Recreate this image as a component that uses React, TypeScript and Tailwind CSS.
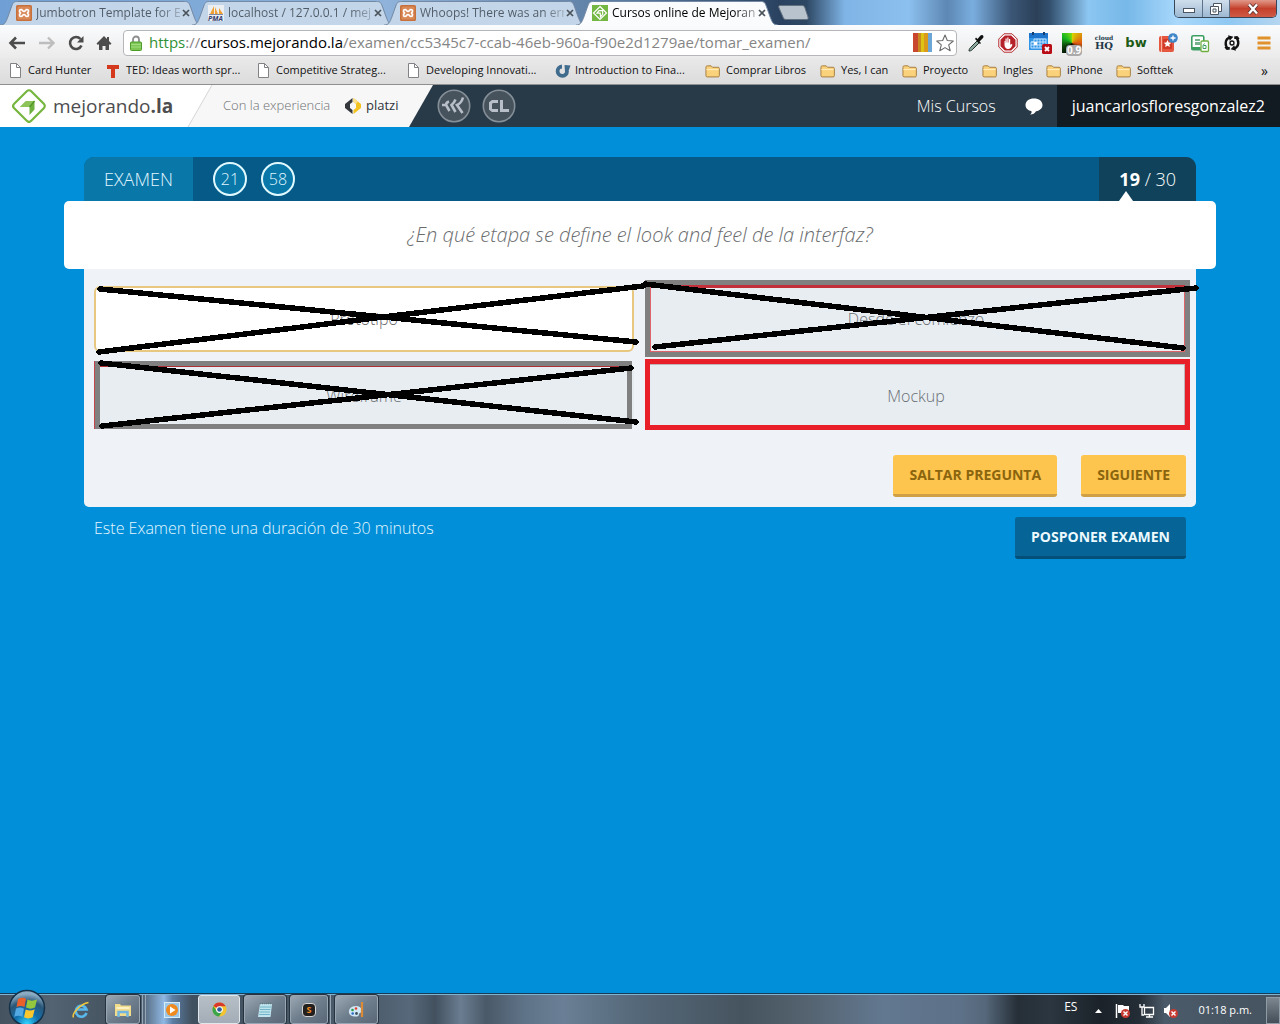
import type { ReactNode } from "react";

type TabData = { title: string; icon: ReactNode; active?: boolean };

function XamppIcon() {
  return (
    <svg viewBox="0 0 16 16" className="size-4 shrink-0" aria-hidden="true">
      <rect width="16" height="16" rx="1.5" fill="#c8703c" />
      <rect x="1.5" y="1.5" width="13" height="13" rx="1" fill="#d98a58" />
      <path d="M5 4.500c-2 0-2 3 0 3.500-2 .5-2 3.500 0 3.500 1.600 0 1.500-2 3-2s1.400 2 3 2c2 0 2-3 0-3.500 2-.5 2-3.500 0-3.500-1.600 0-1.500 2-3 2s-1.400-2-3-2z" fill="none" stroke="#fff" strokeWidth="1.700" />
    </svg>
  );
}

function PmaIcon() {
  return (
    <span className="relative block size-4 shrink-0 bg-[#eceff2]">
      <svg viewBox="0 0 16 16" className="size-4" aria-hidden="true">
        <path d="M2 9 6 1v8zM7 9V2l3 7zM11 9V3l4 6z" fill="#f0a030" />
        <path d="M1 9.500h14" stroke="#7f8aa8" />
      </svg>
      <span className="absolute -bottom-px left-0 text-[7px] leading-[7px] font-bold text-[#34406e] italic">PMA</span>
    </span>
  );
}

function MejorandoIcon() {
  return (
    <svg viewBox="0 0 16 16" className="size-4 shrink-0" aria-hidden="true">
      <rect width="16" height="16" fill="#74b843" />
      <path d="M8 1.500 14.500 8 8 14.500 1.500 8z" fill="none" stroke="#fff" strokeWidth="1.200" />
      <path d="M5 8.200 7 5.700h3.700v3.700L8.500 12 8.200 8.200z" fill="none" stroke="#fff" strokeWidth="1.200" />
    </svg>
  );
}

const tabs: TabData[] = [
  { title: "Jumbotron Template for E", icon: <XamppIcon /> },
  { title: "localhost / 127.0.0.1 / mej", icon: <PmaIcon /> },
  { title: "Whoops! There was an err", icon: <XamppIcon /> },
  { title: "Cursos online de Mejoran", icon: <MejorandoIcon />, active: true },
];

function Tab({ title, icon, active }: TabData) {
  return (
    <div className={active ? "relative z-10 flex h-full w-48 items-center pl-2" : "relative flex h-full w-48 items-center pl-2"}>
      <svg viewBox="0 0 206 24" preserveAspectRatio="none" className="absolute bottom-0 -left-2 h-6 w-[202px]" aria-hidden="true">
        <path
          d="M0 24C5 24 6 21 8 16L12 5C13.500 1.500 14 .5 18 .5H188C192 .5 192.500 1.500 194 5L198 16C200 21 201 24 206 24"
          fill={active ? "#fafbfc" : "#c3d5e8"}
          stroke="#7288a3"
          strokeWidth="1"
        />
      </svg>
      <div className="relative flex min-w-0 flex-1 items-center">
        {icon}
        <button
          className={
            active
              ? "ml-1 w-[144px] bg-gradient-to-r from-black from-85% to-black/30 bg-clip-text text-left text-xs whitespace-nowrap text-transparent"
              : "ml-1 w-[144px] bg-gradient-to-r from-[#4f5a66] from-85% to-[#4f5a66]/30 bg-clip-text text-left text-xs whitespace-nowrap text-transparent"
          }
        >
          {title}
        </button>
        <button aria-label={"Cerrar " + title} className="flex h-4 w-3 items-center justify-center">
          <svg viewBox="0 0 8 8" className="size-2" aria-hidden="true">
            <path d="m1 1 6 6M7 1 1 7" stroke="#4a525a" strokeWidth="1.700" />
          </svg>
        </button>
      </div>
    </div>
  );
}

function TabStrip() {
  return (
    <div className="flex h-[25px] items-stretch bg-[linear-gradient(90deg,#6f9fd4_0%,#8fb3da_30%,#56779c_50%,#2a4260_61%,#2d4763_63%,#7fb4e6_66%,#8cc0ee_71%,#5d87b4_74%,#7aaedf_76%,#3b5676_79%,#2b4058_81%,#33506e_82%,#8cc6f2_85%,#76b8e8_88%,#a9d8fb_92%,#8fc8f2_96%,#b5d6f0_100%)] pl-2 font-['Open_Sans',sans-serif]">
      {tabs.map((tab) => (
        <Tab key={tab.title} {...tab} />
      ))}
      <button aria-label="Nueva pestaña" className="ml-0.5 flex h-full items-center">
        <svg viewBox="0 0 32 15" className="h-[15px] w-8" aria-hidden="true">
          <path d="M2 .5h22c2 0 2.500 1 3 2.500l3 9c.5 1.500 0 2.500-1.500 2.500H8c-2 0-2.500-1-3-2.500L1 3C.5 1.500.5.5 2 .5z" fill="#b9c3cd" stroke="#62707f" />
        </svg>
      </button>
      <div className="mr-[3px] ml-auto flex h-[18px] overflow-hidden rounded-b-[5px] border border-t-0 border-[#37475a]">
        <button aria-label="Minimizar" className="flex w-7 items-center justify-center border-r border-[#5c7288] bg-gradient-to-b from-[#d0dfed] to-[#9db8d1]">
          <svg viewBox="0 0 12 6" className="mt-1 h-1.5 w-3" aria-hidden="true">
            <rect x=".5" y=".5" width="11" height="4" fill="#fff" stroke="#4a5563" />
          </svg>
        </button>
        <button aria-label="Restaurar" className="flex w-[27px] items-center justify-center border-r border-[#5c7288] bg-gradient-to-b from-[#d0dfed] to-[#9db8d1]">
          <svg viewBox="0 0 12 12" className="size-3" aria-hidden="true">
            <path d="M3.500.5h8v8h-3v3h-8v-8h3z" fill="#fff" stroke="#4a5563" />
            <path d="M3.500 3.500h5v5M3 6h3v3H3z" fill="none" stroke="#4a5563" />
          </svg>
        </button>
        <button aria-label="Cerrar ventana" className="flex w-[46px] items-center justify-center bg-gradient-to-b from-[#e0988a] via-[#c4402c] to-[#cf5a45]">
          <svg viewBox="0 0 12 12" className="size-3" aria-hidden="true">
            <path d="m2 1.500 8 9M10 1.500l-8 9" stroke="#5a3030" strokeWidth="4" />
            <path d="m2 1.500 8 9M10 1.500l-8 9" stroke="#fff" strokeWidth="2.400" />
          </svg>
        </button>
      </div>
    </div>
  );
}

const extensions: { name: string; icon: ReactNode }[] = [
  {
    name: "Selector de color",
    icon: (
      <svg viewBox="0 0 20 20" className="size-5">
        <path d="M3 18c0-2 1-3 2-4l6-6 2 2-6 6c-1 1-2 2-4 2z" fill="#8aa59a" stroke="#24332e" />
        <path d="m9 6 5 5 1-1-1.500-1.500L17 5c1.500-2-.5-4-2.500-2.500L11.500 6 10 4.500z" fill="#111" />
      </svg>
    ),
  },
  {
    name: "AdBlock",
    icon: (
      <svg viewBox="0 0 20 20" className="size-5">
        <path d="M6 .8h8L19.200 6v8L14 19.200H6L.8 14V6z" fill="#fff" stroke="#b22a2e" />
        <path d="M6.800 2.500h6.400l4.300 4.300v6.400l-4.300 4.300H6.800l-4.300-4.300V6.800z" fill="#b5222a" />
        <path d="M6.500 8v4c0 2 1.500 4 3.500 4 2.200 0 3.500-1.500 4.500-4.500l-1.500-.5-.8 1V6h-1.200v3.500h-.5V4.500H9.300v5h-.6V5.500H7.500v4.500H7.300V8z" fill="#fff" />
      </svg>
    ),
  },
  {
    name: "Calendario",
    icon: (
      <svg viewBox="0 0 24 24" className="size-6">
        <rect x="1" y="2" width="19" height="17" fill="#2f95e6" />
        <rect x="1" y="2" width="19" height="5" fill="#1c74cc" />
        <path d="M5 1v3M16 1v3" stroke="#123e70" strokeWidth="2" />
        <path d="M6 8h12v9H3v-6h3zM3 11h15M3 14h15M6 11v6M9 8v9M12 8v9M15 8v9" fill="none" stroke="#cfe8ff" strokeWidth=".9" />
        <path d="M6 11h3v3H6z" fill="#fff" />
        <rect x="14" y="13" width="10" height="10" rx="1.500" fill="#b80d17" />
        <path d="m17 16 4 4M21 16l-4 4" stroke="#fff" strokeWidth="1.800" />
      </svg>
    ),
  },
  {
    name: "PageRank",
    icon: (
      <span className="relative block size-5 bg-[conic-gradient(from_0deg,#d9d400,#e05a10_25%,#3a1c00_40%,#000_55%,#0d4a0b_70%,#17b520_85%,#7fdc10)]">
        <span className="absolute top-3 left-1 rounded-sm bg-[#aaa] px-px text-[10px] leading-[11px] font-bold text-white">0.9</span>
      </span>
    ),
  },
  {
    name: "cloudHQ",
    icon: (
      <span className="flex flex-col items-center font-['DejaVu_Serif',serif] font-bold text-[#20384a]">
        <span className="text-[6px] leading-[6px]">cloud</span>
        <span className="text-[10px] leading-[10px]">HQ</span>
      </span>
    ),
  },
  {
    name: "BuiltWith",
    icon: <span className="font-['DejaVu_Sans',sans-serif] text-[13px] leading-4 font-bold text-[#1d5a14]">bw</span>,
  },
  {
    name: "Marcadores",
    icon: (
      <svg viewBox="0 0 20 20" className="size-5">
        <rect x="1" y="3" width="15" height="16" rx="2" fill="#e5573f" />
        <path d="M3.500 3v16" stroke="#f7b4a5" />
        <rect x="5" y="6" width="9" height="10" rx="1" fill="#d03a26" />
        <path d="m9.500 7 1.200 2.500 2.600.2-2 1.800.6 2.600-2.400-1.400-2.400 1.400.6-2.600-2-1.800 2.600-.2z" fill="#fff" />
        <circle cx="15" cy="5" r="4.800" fill="#3f86c9" />
        <path d="M15 2.500v5M12.500 5h5" stroke="#fff" strokeWidth="1.300" />
      </svg>
    ),
  },
  {
    name: "Diccionario",
    icon: (
      <svg viewBox="0 0 20 20" className="size-5">
        <rect x="1.800" y="2.800" width="12" height="14" rx="1.500" fill="#fff" stroke="#3d9e62" strokeWidth="1.600" />
        <path d="M5 6h5v2H5zM5 9h5v3H5z" fill="#78b28d" />
        <path d="M1.500 14h9v3h-9z" fill="#3d9e62" />
        <rect x="11" y="8" width="7.500" height="10.500" rx="1" fill="#fff" stroke="#6fae3e" strokeWidth="1.300" />
        <path d="M14.500 10.500 13 12.500V15.500h3v-3h-2.500" fill="none" stroke="#3d9e62" />
      </svg>
    ),
  },
  {
    name: "Sincronizar",
    icon: (
      <svg viewBox="0 0 20 20" className="size-[18px]">
        <path d="M6 16.500C1.500 13 2 5.500 7.500 4M14 3.500c4.500 3.500 4 11-1.500 12.500" fill="none" stroke="#111" strokeWidth="2.600" />
        <path d="M5.500 1.500 11.500 3 7.500 7.500zM14.500 18.500 8.500 17l4-4.500z" fill="#111" />
        <path d="M1.500 14.500h6v3h-4zM18.500 5.500h-6v-3h4z" fill="#111" />
        <circle cx="10" cy="10" r="2.200" fill="none" stroke="#111" strokeWidth="1.500" />
      </svg>
    ),
  },
  {
    name: "Menú",
    icon: (
      <svg viewBox="0 0 14 14" className="size-3.5">
        <path d="M.5 2h13M.5 7h13M.5 12h13" stroke="#e0912b" strokeWidth="2.800" />
      </svg>
    ),
  },
];

function Toolbar() {
  return (
    <div className="flex h-[33px] items-center bg-gradient-to-b from-[#fafbfc] to-[#ebebec] pt-0.5 font-['Open_Sans',sans-serif]">
      <div className="flex w-[123px] shrink-0 items-center gap-3 pl-2">
        <button aria-label="Atrás">
          <svg viewBox="0 0 18 14" className="h-3.5 w-[18px]"><path d="M17 7H3M8 1.500 2.500 7 8 12.500" fill="none" stroke="#4c4c4c" strokeWidth="2.600" /></svg>
        </button>
        <button aria-label="Adelante">
          <svg viewBox="0 0 18 14" className="h-3.5 w-[18px]"><path d="M1 7h14M10 1.500 15.500 7 10 12.500" fill="none" stroke="#bdbdbd" strokeWidth="2.400" /></svg>
        </button>
        <button aria-label="Recargar">
          <svg viewBox="0 0 16 16" className="size-4"><path d="M13.500 10.500A6 6 0 1 1 12.500 4" fill="none" stroke="#4c4c4c" strokeWidth="2.600" /><path d="M15.500 1v6.500H9z" fill="#4c4c4c" /></svg>
        </button>
        <button aria-label="Inicio">
          <svg viewBox="0 0 16 16" className="size-4"><path d="M8 1 .5 8.500 2 10l1-1v6h3.500v-4h3v4H13V9l1 1 1.500-1.500L13 6V2h-2v2z" fill="#4c4c4c" /></svg>
        </button>
      </div>
      <div className="relative flex h-[26px] min-w-0 flex-1 items-center rounded-sm border border-[#b4b6b9] bg-white pr-0.5 pl-1.5">
        <svg viewBox="0 0 12 16" className="h-4 w-3 shrink-0" aria-hidden="true">
          <path d="M3 8V4.500a3 3 0 0 1 6 0V8" fill="none" stroke="#8e8e8e" strokeWidth="1.800" />
          <rect x=".5" y="7" width="11" height="8.500" rx="1" fill="#7cc651" stroke="#4f9a2c" />
          <path d="M1 9.500h10M1 12h10" stroke="#a4dc82" />
        </svg>
        <div className="ml-[7px] min-w-0 flex-1 truncate text-[15px] text-[#858585]" role="textbox" aria-label="Dirección" contentEditable suppressContentEditableWarning>
          <span className="text-[#2f9135]">https</span>://<span className="text-black">cursos.mejorando.la</span>/examen/cc5345c7-ccab-46eb-960a-f90e2d1279ae/tomar_examen/
        </div>
        <button aria-label="Extensión de página">
          <svg viewBox="0 0 19 19" className="size-[19px]">
            <path d="M0 0h6v19H0z" fill="#c9472f" /><path d="M5 0h4v19H5z" fill="#c88a20" /><path d="M8 0h3v19H8z" fill="#ddc313" /><path d="M11 0h4v19h-4z" fill="#dc9a1c" /><path d="M15 0h4v19h-4z" fill="#6ba6d6" />
          </svg>
        </button>
        <button aria-label="Añadir a marcadores" className="ml-1">
          <svg viewBox="0 0 18 18" className="size-[18px]"><path d="m9 1 2.300 5.500 6 .5-4.600 3.900 1.500 5.800L9 13.600l-5.200 3.100 1.500-5.800L.7 7l6-.5z" fill="#fff" stroke="#6a6a6a" strokeWidth="1.100" strokeLinejoin="round" /></svg>
        </button>
      </div>
      <div className="flex shrink-0 pl-[3px]">
        {extensions.map((e) => (
          <button key={e.name} aria-label={e.name} title={e.name} className="flex h-6 w-8 items-center justify-center">
            {e.icon}
          </button>
        ))}
      </div>
    </div>
  );
}

function PageIcon() {
  return (
    <svg viewBox="0 0 13 15" className="mr-1.5 h-[15px] w-[13px] shrink-0" aria-hidden="true">
      <path d="M1.500.5h6l4 4v10h-10z" fill="#fff" stroke="#808285" /><path d="M7.500.5v4h4" fill="none" stroke="#808285" />
    </svg>
  );
}

function FolderIcon() {
  return (
    <svg viewBox="0 0 16 14" className="mr-1.5 h-3.5 w-[15px] shrink-0" aria-hidden="true">
      <path d="M1 3.500C1 2 1.500 1.500 2.500 1.500h4L8 3h6c.8 0 1.300.5 1.300 1.300V12c0 .8-.5 1.300-1.300 1.300H2.300C1.500 13.300 1 12.800 1 12z" fill="#fbd27c" stroke="#a37a3c" />
      <path d="M1.500 5.500h13" stroke="#fff0c4" />
    </svg>
  );
}

const bookmarks: { label: string; icon: ReactNode; width: string }[] = [
  { label: "Card Hunter", icon: <PageIcon />, width: "w-[97px]" },
  {
    label: "TED: Ideas worth spr...",
    icon: <svg viewBox="0 0 14 14" className="mr-1.5 size-3.5 shrink-0"><path d="M1 1h12v4H9v9H5V5H1z" fill="#d4391e" /></svg>,
    width: "w-[151px]",
  },
  { label: "Competitive Strateg...", icon: <PageIcon />, width: "w-[150px]" },
  { label: "Developing Innovati...", icon: <PageIcon />, width: "w-[148px]" },
  {
    label: "Introduction to Fina...",
    icon: <svg viewBox="0 0 16 14" className="mr-1 h-3.5 w-4 shrink-0"><path d="M7 2.500A4.700 4.700 0 1 0 12 7" fill="none" stroke="#3f6b8d" strokeWidth="3.800" /><path d="M9.500 1 15.500 1.500 13.500 7 10 7.500z" fill="#3f6b8d" /></svg>,
    width: "w-[150px]",
  },
  { label: "Comprar Libros", icon: <FolderIcon />, width: "w-[115px]" },
  { label: "Yes, I can", icon: <FolderIcon />, width: "w-[82px]" },
  { label: "Proyecto", icon: <FolderIcon />, width: "w-20" },
  { label: "Ingles", icon: <FolderIcon />, width: "w-16" },
  { label: "iPhone", icon: <FolderIcon />, width: "w-[70px]" },
  { label: "Softtek", icon: <FolderIcon />, width: "w-20" },
];

function BookmarksBar() {
  return (
    <nav aria-label="Marcadores" className="flex h-[27px] items-center overflow-hidden border-b border-[#8f8f8f] bg-gradient-to-b from-[#e9e9ea] to-[#dcdcdd] pr-3 pb-px pl-[9px] font-['Open_Sans',sans-serif] text-[11px] text-[#111]">
      {bookmarks.map((b) => (
        <div key={b.label} className={b.width + " shrink-0"}>
          <a href="#" className="flex items-center whitespace-nowrap">
            {b.icon}
            {b.label}
          </a>
        </div>
      ))}
      <button aria-label="Más marcadores" className="ml-auto text-sm leading-4">»</button>
    </nav>
  );
}

function SiteHeader() {
  return (
    <header className="flex h-[42px] items-stretch bg-[#283a47] font-['Open_Sans',sans-serif]">
      <div className="relative isolate flex w-[433px] shrink-0 items-center">
        <svg viewBox="0 0 433 42" className="absolute inset-0 -z-10 h-full w-full" aria-hidden="true">
          <path d="M0 0h433l-24 42H0z" fill="#f7f7f8" />
          <path d="M0 0h212l-24 42H0z" fill="#fff" />
          <path d="m212 0-24 42" stroke="#d4d6d8" />
        </svg>
        <a href="#" className="flex w-[223px] items-center pl-3 text-[19px] text-[#4d4d4f]">
          <svg viewBox="0 0 34 34" className="mr-[7px] size-[34px]" aria-hidden="true">
            <path d="M14.800 2.200 2.200 14.800c-1.300 1.300-1.300 3.100 0 4.400l12.600 12.600c1.300 1.300 3.100 1.300 4.400 0l12.600-12.600c1.300-1.300 1.300-3.100 0-4.400L19.200 2.200c-1.300-1.300-3.100-1.300-4.400 0z" fill="#fff" stroke="#76b63f" strokeWidth="2.200" />
            <path d="M14 12h8.500v8.500L17.500 26v-8H8z" fill="#6fb13f" />
            <path d="M14 12h8.500L17.500 18H8z" fill="#8cc45a" />
            <path d="m22.500 12-5 6" stroke="#4f9428" strokeWidth="1.200" />
          </svg>
          <span>mejorando<b>.la</b></span>
        </a>
        <span className="w-[121px] text-[13px] font-light text-[#6d6f72]">Con la experiencia</span>
        <a href="#" className="flex items-center text-[13px] font-medium text-[#2e3338]">
          <svg viewBox="0 0 18 18" className="mr-1 size-[18px]" aria-hidden="true">
            <path d="M8.500 1 1 7v4l7.500 6v-4L6 11V7l2.500-2z" fill="#34383c" />
            <path d="M9.500 1v4L12 7v4l-2.500 2v4L17 11V7z" fill="#f3c321" />
            <path d="M9.500 1v4L12 7l2-2.500z" fill="#fbe08a" />
          </svg>
          platzi
        </a>
      </div>
      <div className="flex items-center gap-[11px] pl-1">
        <a href="#" aria-label="Mejorando">
          <svg viewBox="0 0 34 34" className="size-[34px]">
            <circle cx="17" cy="17" r="15.700" fill="#46525c" stroke="#858f98" strokeWidth="1.600" />
            <path d="M5 16h4M12 12.500c-1.500.5-3 2-3 3.500l3.500 6M18.500 10.500c-1 2.500-2 4-4 5.500l4 7M26 8.500c-1 3.500-2.500 6-6 7.500l5.500 8" fill="none" stroke="#b8bfc8" strokeWidth="2.600" />
          </svg>
        </a>
        <a href="#" aria-label="CL">
          <svg viewBox="0 0 34 34" className="size-[34px]">
            <circle cx="17" cy="17" r="15.700" fill="#46525c" stroke="#858f98" strokeWidth="1.600" />
            <path d="M16 12.500h-5.500L8.500 14v6l2 1.500H16M19.500 11v10.500H27" fill="none" stroke="#b8bfc8" strokeWidth="3" />
          </svg>
        </a>
      </div>
      <nav className="ml-auto flex items-stretch text-base text-white">
        <a href="#" className="flex items-center font-light">Mis Cursos</a>
        <a href="#" aria-label="Mensajes" className="flex w-[61px] items-center pl-[29px]">
          <svg viewBox="0 0 18 17" className="h-[17px] w-[18px]"><path d="M9 .5C4 .5.5 3.200.5 7c0 3.300 2.500 5.500 6 6.200.5 1.500-.5 2.500-1.500 3.300 3 0 5-1.300 6-3.300 4-.6 6.500-3 6.500-6.200C17.500 3.200 14 .5 9 .5z" fill="#fff" /></svg>
        </a>
        <a href="#" className="flex items-center bg-[#121b22] px-[15px]">juancarlosfloresgonzalez2</a>
      </nav>
    </header>
  );
}

const answers = [
  { id: "prototipo", label: "Prototipo", selected: true },
  { id: "desde", label: "Desde el comienzo", frame: "-top-1.5 -right-1 -bottom-[5px] -left-px border-5 border-[#808080]", inner: "border border-t-3 border-[#e0636a] border-t-[#c4303a]" },
  { id: "wireframe", label: "Wireframe", frame: "-top-0.5 right-0.5 bottom-0 left-px border-5 border-[#808080] shadow-[-1px_0_0_#c4444c]", inner: "border-t border-[#b03038]" },
  { id: "mockup", label: "Mockup", frame: "-top-1 -right-1 -bottom-px -left-px border-5 border-[#e81e28]", inner: "border-t border-r border-[#c0b4b8]" },
];

function Answers() {
  return (
    <div className="relative mt-[17px]">
      <fieldset className="grid grid-cols-2 gap-x-3 gap-y-[11px]">
        <legend className="sr-only">Respuestas</legend>
        {answers.map((a) => (
          <label
            key={a.id}
            htmlFor={a.id}
            className={
              a.selected
                ? "relative flex h-[66px] items-center justify-center rounded-md border-2 border-[#e8c780] bg-white text-base font-light text-[#6a6a6c]"
                : "relative flex h-[66px] items-center justify-center rounded-md bg-[#e8edf2] text-base font-light text-[#6a6f74]"
            }
          >
            <input id={a.id} type="radio" name="respuesta" defaultChecked={a.selected} className="sr-only" />
            {a.label}
            {a.frame && (
              <span className={"pointer-events-none absolute " + a.frame}>
                <span className={"block h-full " + a.inner} />
              </span>
            )}
          </label>
        ))}
      </fieldset>
      <svg viewBox="0 0 1092 143" preserveAspectRatio="none" shapeRendering="crispEdges" className="pointer-events-none absolute inset-0 h-full w-full overflow-visible" aria-hidden="true">
        <path
          d="M6 3 542 56M5 66 289 31 549 0 552-2M551-2 1089 62M561 61 1102 2M7 77 542 136M8 140 537 82"
          fill="none"
          stroke="#000"
          strokeWidth="5.500"
          strokeLinecap="round"
        />
      </svg>
    </div>
  );
}

function Exam() {
  return (
    <main className="flex-1 bg-[#008fd8] px-16 pt-[30px] font-['Open_Sans',sans-serif]">
      <div className="mx-auto max-w-6xl">
        <div className="mx-5 flex h-11 items-stretch overflow-hidden rounded-t-[10px] bg-[#055a87] text-lg text-[#e0f6ff]">
          <h1 className="flex items-center bg-[#0a77a9] px-5 font-light">EXAMEN</h1>
          <div className="flex items-center gap-3.5 pl-5 font-light">
            <span className="flex size-[34px] items-center justify-center rounded-full border-2 border-[#e0faff] bg-[#0a77a9] text-base">21</span>
            <span className="flex size-[34px] items-center justify-center rounded-full border-2 border-[#e0faff] bg-[#0a77a9] text-base">58</span>
          </div>
          <div className="relative ml-auto flex items-center bg-[#10435b] px-5 font-light whitespace-pre text-white">
            <b className="font-bold">19</b> / 30
            <svg viewBox="0 0 14 10" className="absolute bottom-0 left-5 h-2.5 w-3.5" aria-hidden="true"><path d="m7 0 7 10H0z" fill="#fff" /></svg>
          </div>
        </div>
        <h2 className="flex h-[68px] items-center justify-center rounded-[5px] bg-white text-xl font-light text-[#6a6c6e] italic">
          ¿En qué etapa se define el look and feel de la interfaz?
        </h2>
        <div className="mx-5">
          <section className="flow-root rounded-b-[5px] bg-[#eff3f7] px-2.5 pb-2.5">
            <Answers />
            <div className="mt-[26px] flex justify-end gap-6 text-sm font-bold text-[#8a650e]">
              <button className="h-[42px] rounded-[3px] border-b-3 border-[#cf9f45] bg-[#fdc44e] px-4">SALTAR PREGUNTA</button>
              <button className="h-[42px] rounded-[3px] border-b-3 border-[#cf9f45] bg-[#fdc44e] px-4">SIGUIENTE</button>
            </div>
          </section>
          <div className="flex items-start justify-between px-2.5 pt-2.5">
            <p className="text-base leading-[22px] font-light text-[#e6f6ff]">Este Examen tiene una duración de 30 minutos</p>
            <button className="h-[42px] rounded-[3px] border-b-3 border-[#044f78] bg-[#066496] px-4 text-sm font-bold text-[#ecfaff]">POSPONER EXAMEN</button>
          </div>
        </div>
      </div>
    </main>
  );
}

const taskButton = "flex h-[29px] items-center justify-center rounded-[3px] border border-[#98a6b3] bg-gradient-to-br from-[#9ba7b3] via-[#6f7e8c] to-[#596776] shadow-[0_0_0_1px_#26333f]";

function Taskbar() {
  return (
    <footer className="flex h-[30px] items-end border-t border-[#7fb2d3] bg-[linear-gradient(90deg,#45525f_0%,#536372_4%,#45535f_9%,#4c5d6d_11%,#8fb8e4_12.800%,#5b7da3_13.500%,#41505e_15%,#4c5c6b_29%,#56687a_32%,#43515f_34%,#6a7d91_36%,#4a5968_38%,#5f7388_41%,#6a7f95_44%,#546778_50%,#46545f_58%,#556370_63%,#627890_69%,#5d7188_75%,#55677a_77%,#262f38_79.500%,#2b3640_82%,#1b2229_86%,#242d36_89%,#4b5a69_91%,#46535f_100%)] font-['Open_Sans',sans-serif] text-white shadow-[0_-1px_0_#163c58]">
      <button aria-label="Inicio de Windows" className="relative h-full w-14">
        <svg viewBox="0 0 38 38" className="absolute -top-1.5 left-2 h-[38px] w-[38px]">
          <defs>
            <radialGradient id="orb" cx="50%" cy="95%" r="85%">
              <stop offset="0" stopColor="#2fd5ff" /><stop offset=".4" stopColor="#126fae" /><stop offset=".75" stopColor="#2a5677" /><stop offset="1" stopColor="#8babc3" />
            </radialGradient>
          </defs>
          <circle cx="19" cy="19" r="17.500" fill="url(#orb)" stroke="#13314a" strokeWidth="1.500" />
          <path d="M10 10c3-1.500 5.500-1.500 8-.2L16.500 18c-2.500-1.300-5-1.300-8 0z" fill="#e9602b" />
          <path d="M19.500 10.500c3 1.500 5.500 1.500 9.500 0L27 18.500c-3 1.500-6 1.500-9 0z" fill="#93c83e" />
          <path d="M8 19.500c3-1.300 5.500-1.200 8 .2l-1.700 8c-2.500-1.400-5-1.400-8 0z" fill="#53a9e4" />
          <path d="M17.700 20.500c3 1.400 6 1.400 9-.2l-2 8c-3 1.500-5.700 1.500-8.700 0z" fill="#fbc72f" />
        </svg>
      </button>
      <button aria-label="Internet Explorer" className="flex h-[29px] w-[50px] items-center justify-center">
        <svg viewBox="0 0 18 18" className="size-[18px]">
          <path d="M14.500 12A5.500 5.500 0 1 1 14.500 8.500H5" fill="none" stroke="#59b9ee" strokeWidth="2.600" />
          <path d="M1.500 16.500C-.5 13 8 3 16.500 1.500" fill="none" stroke="#f3c73b" strokeWidth="1.500" />
        </svg>
      </button>
      <button aria-label="Explorador de archivos" className={taskButton + " w-[34px]"}>
        <svg viewBox="0 0 18 16" className="h-4 w-[18px]">
          <path d="M1 2h5l1 1.500h10V14H1z" fill="#f2dc8b" /><path d="M2.500 5h13v2h-13z" fill="#fbf1c5" />
          <path d="M4.500 15v-5h9v5" fill="none" stroke="#70b5e0" strokeWidth="2.500" />
        </svg>
      </button>
      <span className="h-[29px] w-[3px] border-r border-[#98a6b3]" />
      <span className="h-[29px] w-[3px] border-r border-[#98a6b3]" />
      <button aria-label="Reproductor multimedia" className="flex h-[29px] w-[52px] items-center justify-center">
        <svg viewBox="0 0 16 16" className="size-4">
          <rect x=".5" y=".5" width="15" height="15" fill="#9bc8e8" stroke="#d9ebf7" /><circle cx="8" cy="8" r="6" fill="#ef8a1f" /><path d="m6 4.500 5.500 3.500L6 11.500z" fill="#fff" />
        </svg>
      </button>
      <button aria-label="Google Chrome" className="flex h-[29px] w-[42px] items-center justify-center rounded-[3px] border border-[#e2e7eb] bg-gradient-to-b from-[#b6bec6] to-[#a4adb7]">
        <svg viewBox="0 0 16 16" className="size-[15px]">
          <circle cx="8" cy="8" r="7.500" fill="#f4c430" /><path d="M8 8 1.500 4.200A7.500 7.500 0 0 1 14.600 4.500H8z" fill="#d8392b" /><path d="M1.400 4.400a7.500 7.500 0 0 0 6.100 11.100L10.800 10 5 9.500z" fill="#3ba54a" /><circle cx="8" cy="8" r="3.600" fill="#fff" /><circle cx="8" cy="8" r="2.500" fill="#315c9c" />
        </svg>
      </button>
      <button aria-label="Bloc de notas" className={taskButton + " ml-1 w-[42px]"}>
        <svg viewBox="0 0 16 16" className="size-4">
          <path d="M3 2h12l-1.500 13H1z" fill="#bfe4ee" /><path d="M3 5h11M3 7.500h10.500M2.500 10h10.500M2.300 12.500h10.500" stroke="#5ca6bd" strokeWidth=".8" /><path d="M3 1.500h12" stroke="#5d7a86" strokeWidth="1.500" strokeDasharray="1 1" />
        </svg>
      </button>
      <button aria-label="Sublime Text" className={taskButton + " ml-1 w-[38px]"}>
        <span className="flex size-3.5 items-center justify-center rounded-sm border border-[#d4d4d4] bg-[#22201e] text-[9px] leading-none font-bold text-[#f08a24]">S</span>
      </button>
      <span className="h-[29px] w-[3px] border-r border-[#98a6b3]" />
      <button aria-label="Paint" className={taskButton + " ml-1 w-[43px]"}>
        <svg viewBox="0 0 18 16" className="h-4 w-[18px]">
          <path d="M8 4C3 4 .5 7 1 10.500 1.300 13.500 5 15 9 14.500c3-.4 1-3 3-3.500 3-.6 2.500-7-4-7z" fill="#cfe6f5" />
          <circle cx="4.500" cy="8" r="1.300" fill="#2a9b4d" /><circle cx="8" cy="6.500" r="1.300" fill="#e04030" /><circle cx="4.700" cy="11.500" r="1.300" fill="#2d69c0" /><circle cx="8.500" cy="11.500" r="1.400" fill="#40505e" />
          <path d="M14 0v6M14 6v9" stroke="#dd8a37" strokeWidth="2.200" />
        </svg>
      </button>
      <div className="ml-auto flex h-full items-center pt-0.5">
        <span className="-mt-2 mr-[18px] text-xs">ES</span>
        <button aria-label="Mostrar iconos ocultos" className="mr-[13px]">
          <svg viewBox="0 0 7 4" className="h-1 w-[7px]"><path d="M3.500 0 7 4H0z" fill="#fff" /></svg>
        </button>
        <button aria-label="Centro de actividades" className="mr-2">
          <svg viewBox="0 0 16 16" className="size-4"><path d="M1.500 1v14" stroke="#fff" strokeWidth="1.500" /><path d="M3 2h5l1 1h5v7H3z" fill="#fff" /><circle cx="10.500" cy="10.500" r="4.500" fill="#c93a32" /><path d="m8.500 8.500 4 4M12.500 8.500l-4 4" stroke="#fff" strokeWidth="1.400" /></svg>
        </button>
        <button aria-label="Red" className="mr-2">
          <svg viewBox="0 0 16 16" className="size-4"><path d="M5.500 4.500h9v7h-9zM7 14h7M10.500 11.500V14M1 1v3h4V1M3 4v8h2" fill="none" stroke="#fff" strokeWidth="1.300" /></svg>
        </button>
        <button aria-label="Volumen" className="mr-[19px]">
          <svg viewBox="0 0 16 16" className="size-4"><path d="M1 5h2l4-4v13L3 10H1z" fill="#fff" /><circle cx="10.500" cy="10.500" r="4.500" fill="#c93a32" /><path d="m8.500 8.500 4 4M12.500 8.500l-4 4" stroke="#fff" strokeWidth="1.400" /></svg>
        </button>
        <time className="mr-3.5 text-[11px] font-medium whitespace-nowrap">01:18 p.m.</time>
        <button aria-label="Mostrar escritorio" className="h-full w-3.5 border border-[#8f9ba6] bg-gradient-to-b from-[#7d8790] to-[#444e58]" />
      </div>
    </footer>
  );
}

export default function App() {
  return (
    <div className="flex min-h-screen flex-col overflow-x-hidden">
      <TabStrip />
      <Toolbar />
      <BookmarksBar />
      <SiteHeader />
      <Exam />
      <Taskbar />
    </div>
  );
}
